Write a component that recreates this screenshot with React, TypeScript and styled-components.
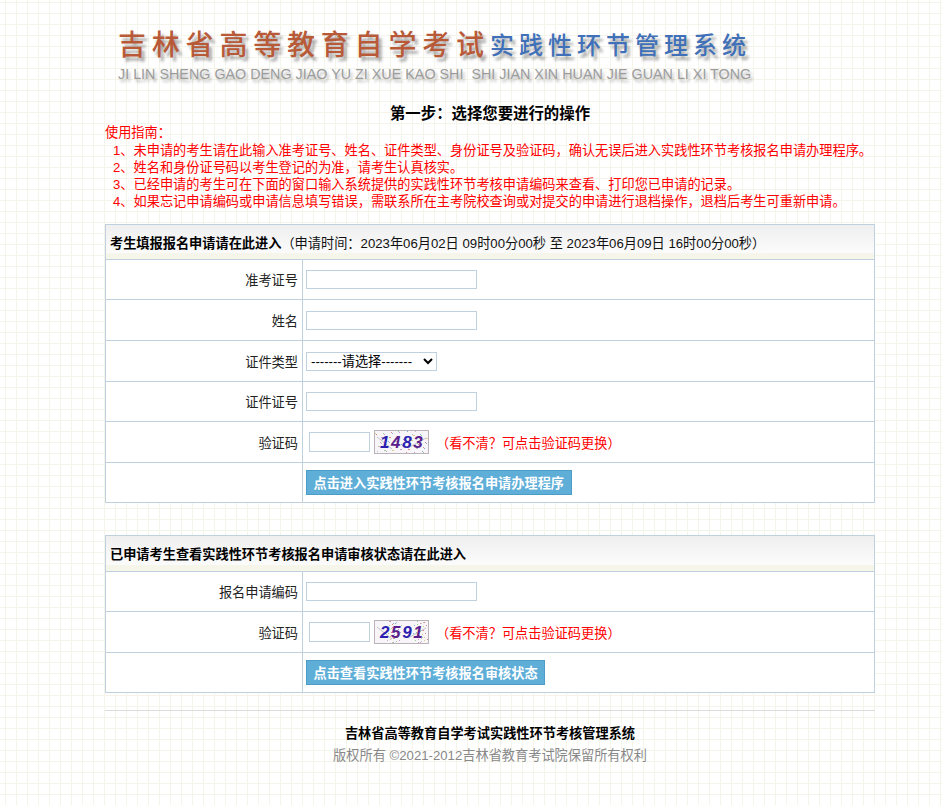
import styled, { createGlobalStyle } from 'styled-components';

const GlobalStyle = createGlobalStyle`
  html, body {
    margin: 0;
    padding: 0;
  }
  body {
    background-color: #fff;
    background-image:
      linear-gradient(to right, #f4f4ea 1px, transparent 1px),
      linear-gradient(to bottom, #f4f4ea 1px, transparent 1px);
    background-size: 11px 11px;
    background-position: 5px 2px;
    font-family: "Liberation Sans", "Noto Sans CJK SC", sans-serif;
    font-size: 13.2px;
    color: #000;
  }
`;

const guideLines = [
  '未申请的考生请在此输入准考证号、姓名、证件类型、身份证号及验证码，确认无误后进入实践性环节考核报名申请办理程序。',
  '姓名和身份证号码以考生登记的为准，请考生认真核实。',
  '已经申请的考生可在下面的窗口输入系统提供的实践性环节考核申请编码来查看、打印您已申请的记录。',
  '如果忘记申请编码或申请信息填写错误，需联系所在主考院校查询或对提交的申请进行退档操作，退档后考生可重新申请。',
];

function Captcha({ code, seed }: { code: string; seed: number }) {
  const noise = Array.from({ length: 70 }, (_, i) => {
    const a = (seed * (i + 3) * 7919) % 997;
    const b = (seed * (i + 11) * 104729) % 991;
    return {
      x: 1 + (a % 53),
      y: 1 + (b % 22),
      fill: ['#d88', '#8ad', '#9c9', '#c9c', '#bbb', '#dc8'][(a + b) % 6],
    };
  });
  return (
    <CaptchaSvg viewBox="0 0 55 24" width={55} height={24}>
      <rect x="0.5" y="0.5" width="54" height="23" fill="#f7f5f7" stroke="#b9b3b9" />
      {noise.map((d, i) => (
        <rect key={i} x={d.x} y={d.y} width="1" height="1" fill={d.fill} />
      ))}
      <path d="M3 7 L18 19 M34 18 L52 8" stroke="#a9a9b8" strokeWidth="0.7" fill="none" />
      <text x="6" y="18" fontFamily="Liberation Sans" fontSize="17" fontWeight="700" fontStyle="italic" letterSpacing="1.6">
        {code.split('').map((c, i) => (
          <tspan key={i} fill={i % 2 === 0 ? '#2c1fb0' : '#5a1f8c'}>
            {c}
          </tspan>
        ))}
      </text>
    </CaptchaSvg>
  );
}

export default function App() {
  return (
    <Page>
      <GlobalStyle />
      <Logo>
        <LogoTitle>
          <LogoRed>吉林省高等教育自学考试</LogoRed>
          <LogoBlue>实践性环节管理系统</LogoBlue>
        </LogoTitle>
        <LogoPinyin>JI LIN SHENG GAO DENG JIAO YU ZI XUE KAO SHI&nbsp; SHI JIAN XIN HUAN JIE GUAN LI XI TONG</LogoPinyin>
      </Logo>

      <StepTitle>第一步：选择您要进行的操作</StepTitle>

      <Guide>
        <GuideIntro>使用指南：</GuideIntro>
        {guideLines.map((line, i) => (
          <GuideLine key={i}>
            {i + 1}、{line}
          </GuideLine>
        ))}
      </Guide>

      <FormTable>
        <TableHead $h={34}>
          <strong>考生填报报名申请请在此进入</strong>
          <HeadNote>（申请时间：2023年06月02日 09时00分00秒 至 2023年06月09日 16时00分00秒）</HeadNote>
        </TableHead>
        <Row $h={40}>
          <Label>准考证号</Label>
          <Cell>
            <TextInput />
          </Cell>
        </Row>
        <Row $h={41}>
          <Label>姓名</Label>
          <Cell>
            <TextInput />
          </Cell>
        </Row>
        <Row $h={41}>
          <Label>证件类型</Label>
          <Cell>
            <TypeSelect defaultValue="">
              <option value="">-------请选择-------</option>
              <option value="1">身份证</option>
            </TypeSelect>
          </Cell>
        </Row>
        <Row $h={40}>
          <Label>证件证号</Label>
          <Cell>
            <TextInput />
          </Cell>
        </Row>
        <Row $h={41}>
          <Label>验证码</Label>
          <CodeCell>
            <CodeInput />
            <Captcha code="1483" seed={17} />
            <CodeHint>（看不清？可点击验证码更换）</CodeHint>
          </CodeCell>
        </Row>
        <Row $h={40}>
          <Label />
          <Cell>
            <SubmitButton type="button">点击进入实践性环节考核报名申请办理程序</SubmitButton>
          </Cell>
        </Row>
      </FormTable>

      <SecondTable>
        <TableHead $h={35}>
          <strong>已申请考生查看实践性环节考核报名申请审核状态请在此进入</strong>
        </TableHead>
        <Row $h={40}>
          <Label>报名申请编码</Label>
          <Cell>
            <TextInput />
          </Cell>
        </Row>
        <Row $h={41}>
          <Label>验证码</Label>
          <CodeCell>
            <CodeInput />
            <Captcha code="2591" seed={29} />
            <CodeHint>（看不清？可点击验证码更换）</CodeHint>
          </CodeCell>
        </Row>
        <Row $h={40}>
          <Label />
          <Cell>
            <SubmitButton type="button">点击查看实践性环节考核报名审核状态</SubmitButton>
          </Cell>
        </Row>
      </SecondTable>

      <Footer>
        <FooterTitle>吉林省高等教育自学考试实践性环节考核管理系统</FooterTitle>
        <FooterCopy>版权所有 ©2021-2012吉林省教育考试院保留所有权利</FooterCopy>
      </Footer>
    </Page>
  );
}

const Page = styled.div`
  width: 770px;
  margin-left: 105px;
  padding-bottom: 30px;
`;

const Logo = styled.div`
  height: 105px;
  padding: 23px 0 0 13px;
  box-sizing: border-box;
`;

const LogoTitle = styled.div`
  display: flex;
  align-items: center;
  height: 40px;
  font-family: "Noto Sans CJK SC", sans-serif;
  white-space: nowrap;
  text-shadow: 3px 4px 3px rgba(0, 0, 0, 0.35);
`;

const LogoRed = styled.span`
  font-size: 28px;
  font-weight: 500;
  letter-spacing: 5.8px;
  color: #b85a38;
  width: 372px;
  flex: none;
  overflow: visible;
`;

const LogoBlue = styled.span`
  font-size: 24px;
  font-weight: 500;
  letter-spacing: 5px;
  color: #3f70b8;
`;

const LogoPinyin = styled.div`
  margin-top: 3px;
  font-size: 14.3px;
  line-height: 16px;
  white-space: nowrap;
  letter-spacing: 0.02px;
  color: #9c9c9c;
  text-shadow: 2px 3px 3px rgba(0, 0, 0, 0.3);
`;

const StepTitle = styled.div`
  text-align: center;
  font-size: 15.4px;
  font-weight: 700;
  line-height: 17px;
`;

const Guide = styled.div`
  color: #f00;
  line-height: 17px;
  margin-top: 2px;
`;

const GuideIntro = styled.div`
  margin-bottom: 1px;
`;

const GuideLine = styled.div`
  padding-left: 8px;
  white-space: nowrap;
`;

const FormTable = styled.div`
  margin-top: 14px;
  border: 1px solid #bfd0de;
  background: #fff;
`;

const SecondTable = styled(FormTable)`
  margin-top: 32px;
`;

const TableHead = styled.div<{ $h: number }>`
  display: flex;
  align-items: center;
  height: ${p => p.$h}px;
  box-sizing: border-box;
  padding: 0 0 0 4px;
  background: linear-gradient(to bottom, #efefef 0%, #fbfbfb 82%, #f5f5ea 84%, #f5f5ea 100%);
  white-space: nowrap;
  strong {
    font-weight: 700;
  }
`;

const HeadNote = styled.span`
  color: #111;
`;

const Row = styled.div<{ $h: number }>`
  display: grid;
  grid-template-columns: 197px 1fr;
  height: ${p => p.$h}px;
  box-sizing: border-box;
  border-top: 1px solid #bfd0de;
`;

const Label = styled.div`
  display: flex;
  align-items: center;
  justify-content: flex-end;
  padding-right: 4px;
  border-right: 1px solid #bfd0de;
  color: #222;
`;

const Cell = styled.div`
  display: flex;
  align-items: center;
  padding-left: 3px;
`;

const CodeCell = styled(Cell)`
  padding-left: 6px;
`;

const TextInput = styled.input`
  width: 171px;
  height: 19px;
  box-sizing: border-box;
  padding: 0 2px;
  border: 1px solid #bfd0de;
  background: #fff;
  outline: none;
`;

const CodeInput = styled(TextInput)`
  width: 61px;
  height: 20px;
  margin-right: 4px;
`;

const TypeSelect = styled.select`
  width: 131px;
  height: 19px;
  box-sizing: border-box;
  padding: 0;
  border: 1px solid #bfd0de;
  border-radius: 0;
  background: #fff;
  font-family: "Liberation Sans", "Noto Sans CJK SC", sans-serif;
  font-size: 13.2px;
  color: #000;
`;

const CaptchaSvg = styled.svg`
  display: block;
  flex: none;
`;

const CodeHint = styled.span`
  margin-left: 7px;
  color: #f00;
  white-space: nowrap;
`;

const SubmitButton = styled.button`
  height: 25px;
  padding: 0 6.5px;
  border: 1px solid #4c9cc8;
  border-radius: 0;
  background: #5eaed8;
  color: #fff;
  font-family: "Liberation Sans", "Noto Sans CJK SC", sans-serif;
  font-size: 13.2px;
  font-weight: 700;
  white-space: nowrap;
`;

const Footer = styled.div`
  margin-top: 17px;
  padding-top: 14px;
  border-top: 1px solid #ddd;
  text-align: center;
`;

const FooterTitle = styled.div`
  font-weight: 700;
  line-height: 17px;
`;

const FooterCopy = styled.div`
  margin-top: 5px;
  line-height: 17px;
  color: #888;
`;
